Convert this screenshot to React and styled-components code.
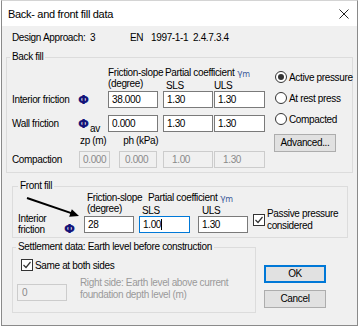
import styled, { createGlobalStyle } from "styled-components";

const GlobalStyle = createGlobalStyle`
  * { box-sizing: border-box; }
  html, body { margin: 0; padding: 0; background: #ffffff; }
  body {
    font-family: "Liberation Sans", Arial, sans-serif;
    font-size: 10px;
    letter-spacing: -0.35px;
    color: #000;
  }
`;

const Window = styled.div`
  position: relative;
  width: 357px;
  height: 326px;
  margin-left: 1px;
  background: #f0f0f0;
  border: 1px solid #8a8a8a;
  border-top-color: #d4d4d4;
  display: flex;
  flex-direction: column;
`;

const TitleBar = styled.div`
  height: 25px;
  flex: none;
  background: #fff;
  display: flex;
  align-items: center;
  justify-content: space-between;
  padding: 0 8px 0 6px;
  font-size: 11px;
  letter-spacing: -0.3px;
`;

const Body = styled.div`
  padding-top: 6px;
  display: flex;
  flex-direction: column;
`;

const DesignRow = styled.div`
  display: flex;
  height: 12px;
  line-height: 12px;
  padding-left: 10px;
`;

const Cell = styled.span`
  flex: none;
  width: ${(p) => (p.$w ? `${p.$w}px` : "auto")};
`;

const Group = styled.fieldset`
  margin: ${(p) => p.$top}px 0 0 ${(p) => p.$left}px;
  width: ${(p) => p.$width}px;
  padding: 0 0 ${(p) => p.$bottom}px 0;
  border: 1px solid #dcdcdc;
  min-width: 0;
  flex: none;
`;

const Legend = styled.legend`
  margin-left: ${(p) => p.$offset}px;
  padding: 0 2px;
  height: 12px;
  line-height: 12px;
`;

const BackContent = styled.div`
  display: flex;
  padding-left: 5px;
`;

const BackGrid = styled.div`
  display: grid;
  grid-template-columns: 66px 30px 55px 51px 51px;
  grid-template-rows: 24px 24px 19px 17px 17px;
  align-items: start;
  margin-top: 4px;
`;

const FrontContent = styled.div`
  position: relative;
  padding-left: 5px;
`;

const FrontGrid = styled.div`
  display: grid;
  grid-template-columns: 46px 20px 55px 59px 54px auto;
  grid-template-rows: 22px 22px;
  align-items: start;
`;

const Head = styled.div`
  line-height: 11px;
  padding-left: ${(p) => p.$pad || 0}px;
  grid-column: ${(p) => p.$col || "auto"};
  white-space: nowrap;
`;

const HeadLine = styled.div`
  display: flex;
  line-height: 11px;
`;

const HeadItem = styled.span`
  flex: none;
  width: ${(p) => (p.$w ? `${p.$w}px` : "auto")};
  padding-left: ${(p) => p.$pad || 0}px;
`;

const Gamma = styled.span`
  color: #3b5a9a;
  margin-left: 3px;
  font-family: "DejaVu Sans", sans-serif;
  font-size: 9px;
  sub {
    font-size: 8px;
    vertical-align: -1px;
  }
`;

const RowLabel = styled.div`
  line-height: ${(p) => p.$lh || 17}px;
  white-space: nowrap;
  margin-top: ${(p) => p.$top || 0}px;
`;

const Phi = styled.div`
  font-family: "DejaVu Sans", sans-serif;
  font-weight: bold;
  font-size: 13px;
  color: #14147a;
  line-height: ${(p) => p.$lh || 17}px;
  padding-top: ${(p) => p.$top || 0}px;
  white-space: nowrap;
  letter-spacing: 0;
  sub {
    font-family: "Liberation Sans", Arial, sans-serif;
    font-weight: normal;
    color: #000;
    font-size: 10px;
    margin-left: 1px;
    vertical-align: -4px;
    letter-spacing: -0.35px;
  }
`;

const TextBox = styled.div`
  width: ${(p) => p.$w}px;
  height: 17px;
  margin-top: ${(p) => p.$top || 0}px;
  line-height: 15px;
  padding-left: ${(p) => p.$pad ?? 3}px;
  background: ${(p) => (p.$disabled ? "#f0f0f0" : "#fff")};
  border: 1px solid
    ${(p) => (p.$focused ? "#0078d7" : p.$disabled ? "#cccccc" : "#7a7a7a")};
  color: ${(p) => (p.$disabled ? "#8a8a8a" : "#000")};
  white-space: nowrap;
`;

const Caret = styled.span`
  display: inline-block;
  width: 1px;
  height: 11px;
  background: #000;
  vertical-align: -2px;
`;

const PairRow = styled.div`
  grid-column: 2 / 4;
  display: flex;
  gap: ${(p) => p.$gap}px;
  padding-left: ${(p) => p.$pad}px;
  line-height: 12px;
  margin-top: ${(p) => p.$top || 0}px;
`;

const OptionColumn = styled.div`
  display: flex;
  flex-direction: column;
  gap: 9px;
  margin: 8px 0 0 10px;
`;

const Option = styled.div`
  display: flex;
  align-items: center;
  height: 12px;
  gap: 2px;
  white-space: nowrap;
`;

const RadioDot = styled.span`
  flex: none;
  width: 12px;
  height: 12px;
  border-radius: 50%;
  border: 1px solid #333;
  background: #fff;
  display: flex;
  align-items: center;
  justify-content: center;
  &::after {
    content: "";
    width: 6px;
    height: 6px;
    border-radius: 50%;
    background: ${(p) => (p.$on ? "#333" : "transparent")};
  }
`;

const Button = styled.div`
  width: 62px;
  height: 18px;
  line-height: 16px;
  text-align: center;
  background: #e1e1e1;
  border: 1px solid ${(p) => (p.$default ? "#0078d7" : "#adadad")};
  box-shadow: ${(p) => (p.$default ? "inset 0 0 0 1px #0078d7" : "none")};
  margin-left: ${(p) => p.$left || 0}px;
`;

const CheckCell = styled.div`
  grid-column: 6;
  grid-row: 1 / 3;
  align-self: end;
  margin: 0 0 4px 1px;
  display: flex;
  align-items: center;
  gap: 2px;
  line-height: 12px;
  white-space: nowrap;
`;

const CheckBox = styled.span`
  flex: none;
  width: 12px;
  height: 12px;
  border: 1px solid #333;
  background: #fff;
  display: flex;
  svg {
    display: block;
  }
`;

const BottomRow = styled.div`
  display: flex;
  align-items: flex-start;
`;

const SettleContent = styled.div`
  padding-left: 4px;
`;

const CheckRow = styled.div`
  display: flex;
  align-items: center;
  gap: 2px;
  height: 12px;
  margin: 6px 0 0 4px;
`;

const InputRow = styled.div`
  display: flex;
  align-items: center;
  gap: 13px;
  margin-top: 12px;
`;

const Hint = styled.div`
  color: #9a9a9a;
  line-height: 12px;
  margin-top: -6px;
  white-space: nowrap;
`;

const ButtonColumn = styled.div`
  display: flex;
  flex-direction: column;
  gap: 7px;
  margin: 27px 0 0 8px;
`;

const Arrow = styled.svg`
  position: absolute;
  left: 20px;
  top: 190px;
`;

function Check() {
  return (
    <CheckBox>
      <svg width="10" height="10" viewBox="0 0 10 10">
        <path d="M1.5 5 L4 7.5 L8.5 2" fill="none" stroke="#333" strokeWidth="1.2" />
      </svg>
    </CheckBox>
  );
}

function PartialHead({ col, pad, slsW, slsPad, ulsPad }) {
  return (
    <Head $col={col}>
      <HeadLine>
        <HeadItem $pad={pad}>
          Partial coefficient
          <Gamma>
            γ<sub>m</sub>
          </Gamma>
        </HeadItem>
      </HeadLine>
      <HeadLine>
        <HeadItem $w={slsW} $pad={slsPad}>
          SLS
        </HeadItem>
        <HeadItem $pad={ulsPad}>ULS</HeadItem>
      </HeadLine>
    </Head>
  );
}

export default function App() {
  return (
    <>
      <GlobalStyle />
      <Window>
        <TitleBar>
          <span>Back- and front fill data</span>
          <svg width="10" height="10" viewBox="0 0 10 10">
            <path d="M0.5 0.5 L9.5 9.5 M9.5 0.5 L0.5 9.5" stroke="#222" strokeWidth="1" />
          </svg>
        </TitleBar>

        <Body>
          <DesignRow>
            <Cell $w={78}>Design Approach:</Cell>
            <Cell $w={40}>3</Cell>
            <Cell $w={21}>EN</Cell>
            <Cell $w={42}>1997-1-1</Cell>
            <Cell>2.4.7.3.4</Cell>
          </DesignRow>

          <Group $top={7} $left={4} $width={347} $bottom={4}>
            <Legend $offset={3}>Back fill</Legend>
            <BackContent>
              <BackGrid>
                <span />
                <span />
                <Head>
                  Friction-slope
                  <br />
                  (degree)
                </Head>
                <PartialHead col="4 / 6" pad={2} slsW={51} slsPad={3} ulsPad={0} />

                <RowLabel>Interior friction</RowLabel>
                <Phi>Φ</Phi>
                <TextBox $w={50}>38.000</TextBox>
                <TextBox $w={50}>1.30</TextBox>
                <TextBox $w={51}>1.30</TextBox>

                <RowLabel>Wall friction</RowLabel>
                <Phi>
                  Φ<sub>av</sub>
                </Phi>
                <TextBox $w={50}>0.000</TextBox>
                <TextBox $w={50}>1.30</TextBox>
                <TextBox $w={51}>1.30</TextBox>

                <span />
                <PairRow $gap={17} $pad={2} $top={1}>
                  <span>zp (m)</span>
                  <span>ph (kPa)</span>
                </PairRow>
                <span />
                <span />

                <RowLabel>Compaction</RowLabel>
                <PairRow $gap={9} $pad={1}>
                  <TextBox $w={31} $disabled $pad={3}>
                    0.000
                  </TextBox>
                  <TextBox $w={38} $disabled $pad={5}>
                    0.000
                  </TextBox>
                </PairRow>
                <TextBox $w={50} $disabled $pad={8}>
                  1.00
                </TextBox>
                <TextBox $w={51} $disabled $pad={8}>
                  1.30
                </TextBox>
              </BackGrid>

              <OptionColumn>
                <Option>
                  <RadioDot $on />
                  Active pressure
                </Option>
                <Option>
                  <RadioDot />
                  At rest press
                </Option>
                <Option>
                  <RadioDot />
                  Compacted
                </Option>
                <Button $left={-1}>Advanced...</Button>
              </OptionColumn>
            </BackContent>
          </Group>

          <Group $top={7} $left={10} $width={336} $bottom={1}>
            <Legend $offset={5}>Front fill</Legend>
            <FrontContent>
              <FrontGrid>
                <span />
                <span />
                <Head $pad={3}>
                  Friction-slope
                  <br />
                  (degree)
                </Head>
                <PartialHead col="4 / 6" pad={9} slsW={59} slsPad={3} ulsPad={4} />
                <CheckCell>
                  <Check />
                  <span>
                    Passive pressure
                    <br />
                    considered
                  </span>
                </CheckCell>

                <RowLabel $lh={11} $top={-1}>
                  Interior
                  <br />
                  friction
                </RowLabel>
                <Phi $lh={12} $top={9}>
                  Φ
                </Phi>
                <TextBox $w={50} $top={2}>
                  28
                </TextBox>
                <TextBox $w={51} $top={2} $focused>
                  1.00
                  <Caret />
                </TextBox>
                <TextBox $w={50} $top={2}>
                  1.30
                </TextBox>
              </FrontGrid>
            </FrontContent>
          </Group>

          <BottomRow>
            <Group $top={3} $left={10} $width={244} $bottom={11}>
              <Legend $offset={3}>Settlement data: Earth level before construction</Legend>
              <SettleContent>
                <CheckRow>
                  <Check />
                  <span>Same at both sides</span>
                </CheckRow>
                <InputRow>
                  <TextBox $w={50} $disabled $pad={4}>
                    0
                  </TextBox>
                  <Hint>
                    Right side: Earth level above current
                    <br />
                    foundation depth level (m)
                  </Hint>
                </InputRow>
              </SettleContent>
            </Group>
            <ButtonColumn>
              <Button $default>OK</Button>
              <Button>Cancel</Button>
            </ButtonColumn>
          </BottomRow>
        </Body>

        <Arrow width="70" height="35" viewBox="0 0 70 35">
          <line x1="5" y1="7" x2="50" y2="22.4" stroke="#000" strokeWidth="2" />
          <polygon points="57,25 47.2,25.8 49.8,18.3" fill="#000" />
        </Arrow>
      </Window>
    </>
  );
}
